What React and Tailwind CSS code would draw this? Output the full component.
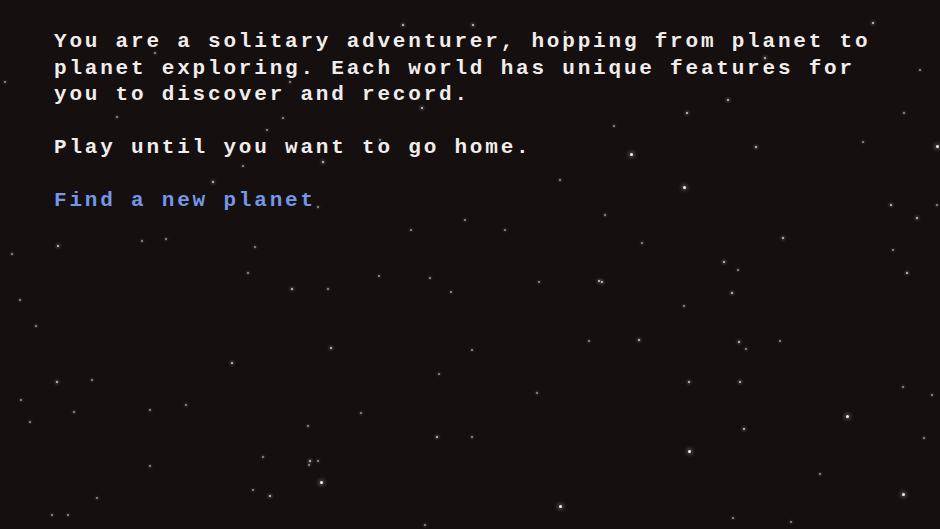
const STARS = [
  // [x, y, size] size: 0 dim, 1 small, 2 bright
  [403, 25, 1], [473, 25, 1], [565, 32, 0], [765, 58, 1], [728, 100, 1], [873, 23, 1],
  [155, 53, 0], [290, 82, 0], [422, 108, 1], [117, 117, 0], [283, 118, 0],
  [323, 162, 1], [243, 166, 0], [213, 182, 1], [318, 207, 0], [267, 130, 0],
  [614, 126, 0], [687, 113, 1], [904, 113, 0], [631, 154, 2], [756, 147, 1],
  [863, 142, 0], [937, 146, 2], [684, 187, 2], [605, 215, 0], [891, 205, 1],
  [937, 205, 0], [917, 218, 1], [642, 243, 0], [783, 238, 1], [893, 250, 0],
  [724, 262, 1], [738, 270, 0], [907, 273, 1], [602, 282, 1], [732, 293, 1],
  [58, 246, 1], [12, 254, 0], [142, 241, 0], [166, 239, 0], [255, 247, 0],
  [248, 273, 0], [292, 289, 1],
  [411, 230, 0], [465, 220, 0], [379, 276, 0], [430, 278, 0], [328, 289, 0],
  [451, 292, 0], [539, 282, 0], [599, 281, 1], [331, 348, 1], [472, 350, 0],
  [589, 341, 0], [439, 374, 0], [537, 393, 0], [361, 413, 0], [437, 437, 1],
  [472, 437, 0], [318, 461, 0], [309, 465, 0], [321, 482, 2], [560, 506, 2],
  [425, 525, 0],
  [684, 306, 0], [639, 340, 1], [739, 342, 1], [780, 341, 0], [746, 349, 0],
  [689, 382, 1], [740, 382, 1], [903, 387, 0], [932, 395, 0], [847, 416, 2],
  [744, 429, 1], [689, 451, 2], [924, 438, 0], [820, 474, 0], [903, 494, 2],
  [733, 518, 0], [791, 522, 0],
  [57, 382, 1], [92, 380, 0], [21, 400, 0], [74, 412, 0], [30, 422, 0],
  [150, 410, 0], [186, 405, 0], [308, 426, 0], [263, 457, 0], [310, 461, 1],
  [150, 466, 0], [97, 498, 0], [253, 490, 0], [270, 496, 1], [52, 515, 0],
  [68, 515, 0], [36, 326, 0], [232, 363, 1], [5, 82, 0], [920, 70, 0],
  [380, 140, 0], [560, 180, 0], [505, 230, 0], [20, 300, 0],
];

const SIZES = [
  "w-[2px] h-[2px] bg-[#9a9290] shadow-[0_0_2px_1px_rgba(160,150,150,0.25)]",
  "w-[2px] h-[2px] bg-[#d2cbc9] shadow-[0_0_3px_1px_rgba(200,190,190,0.4)]",
  "w-[3px] h-[3px] bg-[#f4f0ee] shadow-[0_0_4px_1px_rgba(230,220,220,0.5)]",
];

function Starfield() {
  return (
    <div className="absolute inset-0 overflow-hidden pointer-events-none">
      {STARS.map(([x, y, s], i) => (
        <span
          key={i}
          className={`absolute rounded-full ${SIZES[s]}`}
          style={{ left: x - 1, top: y - 1 }}
        />
      ))}
    </div>
  );
}

export default function App() {
  return (
    <div className="relative w-[940px] h-[529px] overflow-hidden bg-[#150f0f]">
      <Starfield />

      <div className="relative pl-[54px] pt-[29px] w-[900px] font-['Liberation_Mono',monospace] font-bold text-[21px] leading-[26.5px] tracking-[2.8px] text-[#f1edec]">
        <p>
          You are a solitary adventurer, hopping from planet to planet exploring. Each world has unique features for you to discover and record.
        </p>
        <p className="mt-[26.5px]">Play until you want to go home.</p>
        <p className="mt-[26.5px]">
          <a href="#" className="text-[#7398e6]">Find a new planet</a>
        </p>
      </div>
    </div>
  );
}
